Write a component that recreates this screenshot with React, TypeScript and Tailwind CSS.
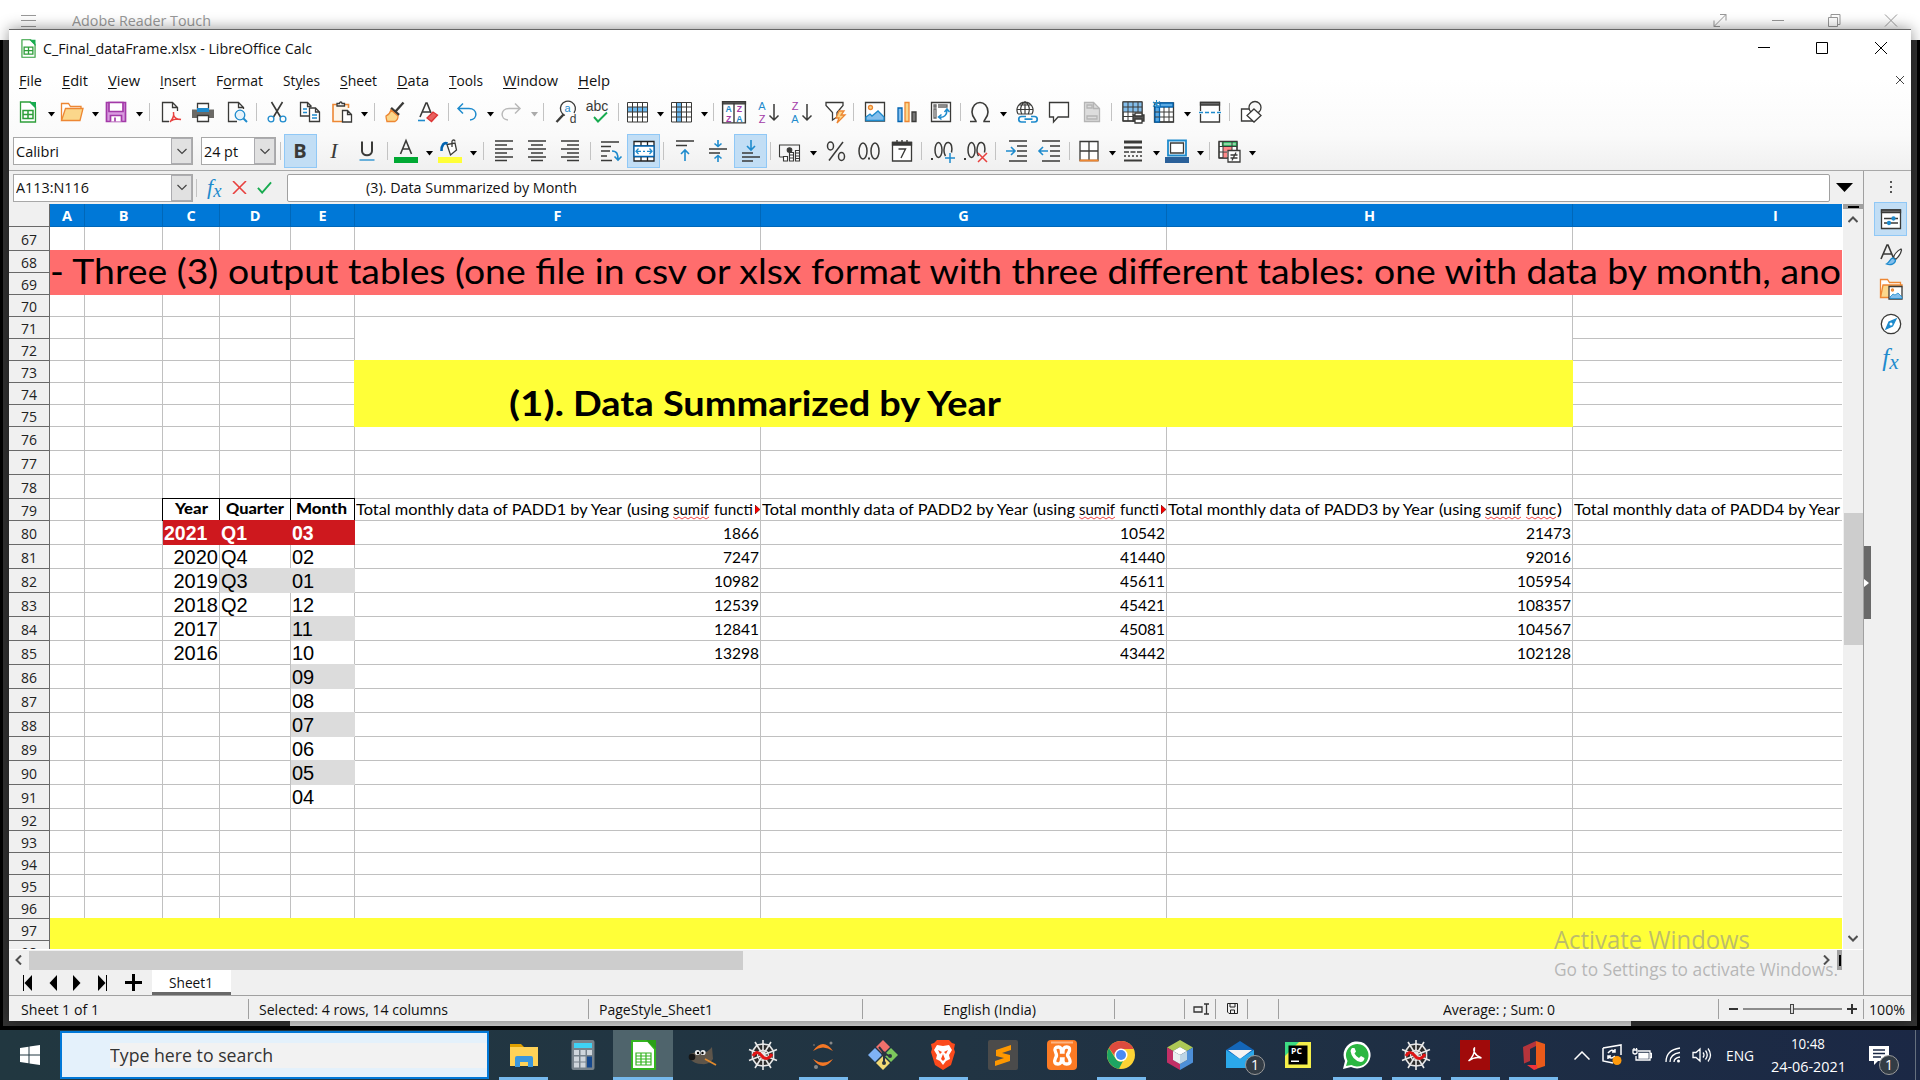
import React, { useLayoutEffect, useRef } from "react";

const K = "#3a3a38";
const B = "#1e8bcd";
const O = "#ed8733";
const P = "#a33aa8";
const G = "#18ab50";

type Kids = { children?: React.ReactNode };

/* Single-line label squeezed or stretched to an exact width. */
function Fit({ w, className = "", children }: Kids & { w: number; className?: string }) {
  const ref = useRef<HTMLSpanElement>(null);
  useLayoutEffect(() => {
    const el = ref.current;
    if (!el) return;
    el.style.transform = "none";
    const n = el.getBoundingClientRect().width;
    if (n > 0) el.style.transform = `scaleX(${w / n})`;
  }, [w]);
  return (
    <span className={`inline-block shrink-0 text-left whitespace-nowrap ${className}`} style={{ width: w }}>
      <span ref={ref} className="inline-block origin-left">{children}</span>
    </span>
  );
}

/* Flow row whose items are centred on the given horizontal stops. */
function Strip({ start, items, className = "" }: { start: number; items: [number, React.ReactNode][]; className?: string }) {
  return (
    <div className={`flex items-center ${className}`}>
      {items.map(([x, node], i) => (
        <div key={i} className="flex w-0 shrink-0 items-center justify-center" style={{ marginLeft: x - (i ? items[i - 1][0] : start) }}>
          <div className="shrink-0">{node}</div>
        </div>
      ))}
    </div>
  );
}

function S({ children, s = 24, c = K, sw = 1.3 }: Kids & { s?: number; c?: string; sw?: number }) {
  return (
    <svg width={s} height={s} viewBox="0 0 24 24" fill="none" stroke={c} strokeWidth={sw} className="block overflow-visible">
      {children}
    </svg>
  );
}

const Dn = ({ c = "#000" }: { c?: string }) => (
  <svg width="7" height="5" viewBox="0 0 7 5" className="mt-1 block"><path d="M0 0h7L3.500 4.500z" fill={c} /></svg>
);
const Sep = () => <div className="h-[18px] w-px bg-[#c3c3c3]" />;
const T = ({ x, y, s, f = K, b = "400", children }: Kids & { x: number; y: number; s: number; f?: string; b?: string }) => (
  <text x={x} y={y} fontSize={s} fill={f} stroke="none" fontWeight={b} fontFamily="Liberation Sans, sans-serif" textAnchor="middle">{children}</text>
);

const CalcDoc = ({ s = 24 }: { s?: number }) => (
  <S s={s} c="#2e9e3a"><path d="M4.500 2h10l5 5v15h-15z" fill="#fff" /><path d="M13 2h7v7z" fill={G} stroke="none" /><path d="M7 10.500h10v8H7zM7 14.500h10M12 10.500v8" strokeWidth="1.500" /></S>
);
const Folder = () => <S c={O}><path d="M1.500 20V3.500h7l2 3h10.500v2" fill="#fff" /><path d="M1.500 20.500 5.500 8.500h17.500l-3 12z" fill="#fbd78b" /></S>;
const Save = () => <S c={P} sw={1.700}><path d="M2.500 2.500h19v19h-19z" fill="#d99be0" /><path d="M5 2.500h14v9H5z" fill="#fff" /><path d="M6.500 21.500v-6h11v6" fill="#fff" /><path d="M11 17.500v4" /></S>;
const Pdf = () => <S><path d="M10 21.500H3.500v-19h10l5 5V11M13.500 2.500v5h5" /><path d="M11 22c3-3 4-7 3.500-10M14.500 15c1 3 4 4.500 7.500 4.500M11 21.500c3-2 7-3 11-2" stroke="#e8403e" strokeWidth="1.500" /></S>;
const Print = () => <S><path d="M6.500 9V3.500h11V9" fill="#fff" /><path d="M1 9.500h22v8.500H1z" fill="#6b6a66" stroke="none" /><path d="M6 8h12v4H6z" fill={B} stroke="none" /><path d="M6.500 15.500h11v6h-11z" fill="#fff" /></S>;
const Preview = () => <S><path d="M12 21.500H3.500v-19h10l5 5V9M13.500 2.500v5h5" /><circle cx="15" cy="15" r="4.800" stroke={B} fill="#e6f3fb" /><path d="m18.500 18.500 3.500 3.500" stroke={B} strokeWidth="2" /></S>;
const Cut = () => <S><path d="M6.500 2l9 15M17.500 2l-9 15" strokeWidth="1.600" /><circle cx="6" cy="19" r="2.900" stroke={B} /><circle cx="18" cy="19" r="2.900" stroke={B} /></S>;
const Copy = () => <S><path d="M11 16H2.500V2.500h7l4 4M9.500 2.500v4h4" /><path d="M11.500 8h6l4 4v9.500h-10zM17.500 8v4h4" fill="#fff" /><path d="M5 9h4M5 12.500h4M14 15h5M14 18h5" stroke={B} /></S>;
const Paste = () => <S><path d="M12 21.500H3v-17h15.500V8" stroke={O} strokeWidth="1.600" fill="#fdf6ea" /><path d="M7 6V3.500h2.500c0-2 2.500-2 2.500 0h2.500V6z" fill="#fff" /><path d="M12.500 10.500h5l4 4v7.500h-9zM17.500 10.500v4h4" fill="#fff" /></S>;
const Brush = () => <S><path d="m20.500 2.500-8 9" strokeWidth="2.400" /><path d="m8 8 8 7" strokeWidth="2.400" /><path d="M8 10c-1 4-3 5-5 6 0 3 1 5 1 5.500h8c2-1 3-4 3-5.500z" fill="#fbd78b" stroke={O} /></S>;
const Clear = () => <S><path d="m5 17 6-14h1l4 10M7 12h8" strokeWidth="1.600" /><path d="M3 20.500h7" stroke={B} strokeWidth="1.600" /><path d="m12 18 6-6 4.500 3-6 6.500z" fill="#e8605e" stroke="#d33" /></S>;
const Undo = () => <S c={B} sw={1.500}><path d="m8 3.500-5 5 5 5M3.500 8.500H14c9 0 9 11 1 11.500" /></S>;
const Redo = () => <S c="#b9b9b9" sw={1.500}><path d="m16 3.500 5 5-5 5M20.500 8.500H10c-9 0-9 11-1 11.500" /></S>;
const Find = () => <S><path d="M20 13a7.500 7.500 0 1 0-9 2.500" /><path d="m9.500 14.500-7 7.500" strokeWidth="2.400" /><T x={13.500} y={12} s={11} f={B}>a</T><T x={19} y={22.500} s={12}>d</T></S>;
const Spell = () => <S><T x={12} y={10.500} s={14}>abc</T><path d="m9 17 4 4.500 9-9" stroke={G} strokeWidth="1.900" /></S>;
const Table = ({ mode }: { mode: "row" | "col" }) => (
  <S><path d="M1.500 2.500h20v19.500h-20z" fill="#fff" stroke="none" />{mode === "row" ? <path d="M1.500 7h20v5h-20z" fill="#6db8ee" stroke="none" /> : <path d="M6.500 2.500h5V22h-5z" fill="#6db8ee" stroke="none" />}
    <path d="M1.500 2.500h20v19.500h-20zM1.500 7h20M1.500 12h20M1.500 17h20M6.500 2.500V22M11.500 2.500V22M16.500 2.500V22" strokeWidth="1" /></S>
);
const Sort = () => <S s={26}><path d="M1.500 2.500h21V22h-21z" fill="#fff" /><path d="M1.500 2.500h21v2h-21z" fill="#666" /><path d="M12 4v18" /><T x={7} y={12.300} s={8} f={B} b="700">A</T><T x={17} y={12.300} s={8} f={P} b="700">Z</T><T x={7} y={21} s={8} f={P} b="700">Z</T><T x={17} y={21} s={8} f={B} b="700">A</T></S>;
const Az = ({ up }: { up?: boolean }) => <S><T x={6} y={10} s={11} f={up ? P : B}>{up ? "Z" : "A"}</T><T x={6} y={22.500} s={11} f={up ? B : P}>{up ? "A" : "Z"}</T><path d="M18 4v16m-4.500-4.500L18 20l4.500-4.500" strokeWidth="1.500" /></S>;
const Filter = () => <S><path d="M3 2.500h17v3l-6 7V17l-4.500 3v-7.500L3 5.500z" fill="#fff" /><path d="m16 11-3 7h3l-2 5 8-8h-4l3-4z" fill="#fbd78b" stroke={O} /></S>;
const Img = () => <S><path d="M2.500 2.500h19V21h-19z" fill="#fff" /><circle cx="7.500" cy="7.500" r="2" fill="#fbd78b" stroke={O} /><path d="m3 17 4-3 2 2 6-5 6 6v3.500H3z" fill="#83beec" stroke={B} /></S>;
const Chart = () => <S><path d="M3 8h4v13.500H3z" fill="#83beec" stroke="#0063b1" /><path d="M10 2.500h4v19h-4z" fill="#fbd78b" stroke={O} /><path d="M17 12h4v9.500h-4z" fill="#777" /></S>;
const Pivot = () => <S><path d="M2.500 2.500h19v19h-19z" fill="#fff" /><path d="M5 5h2v2H5zM9 5h9v2H9M5 9v9h2V9z" stroke="#666" /><path d="M10 17c5 1 8-2 8-7m-2.500 2L18 9l2.500 3M12.500 14.500 9.500 17l3 2.500" stroke={B} strokeWidth="1.500" /></S>;
const Omega = () => <S><path d="M2 21.500h6c0-2-4-4-4-9.500C4 6 8 2.500 12 2.500S20 6 20 12c0 5.500-4 7.500-4 9.500h6" strokeWidth="1.600" /></S>;
const Globe = () => <S><path d="M4 14a8 8 0 1 1 14 0M3 9.500h16M11 1.500v13M4.500 5h13M11 1.500c-5 4-5 9 -3 13M11 1.500c5 4 5 9 3 13M4 14h14" strokeWidth="1.200" /><path d="M12 16.500H7.500a2.700 2.700 0 0 0 0 5.500H12M17 16.500h3.500a2.700 2.700 0 0 1 0 5.500H17M10.500 19.200h8" stroke={B} strokeWidth="1.700" /></S>;
const Comment = () => <S><path d="M2.500 2.500h19V17H11l-4.500 5v-5h-4z" fill="#fff" /></S>;
const HeadFoot = () => <S c="#b5b5b5"><path d="M4.500 2.500h9l6 6v13h-15z" fill="#ddd" /><path d="M13.500 2.500v6h6M7 5h5v3H7zM7 16h10v3H7z" /></S>;
const PrintArea = () => <S><path d="M2 2h19v19H2z" fill="#fff" /><path d="M2 2h19v10H2z" fill="#83beec" stroke="none" /><path d="M2 2h19M2 7h19M2 12h19M2 16.500h10M2 2v19M7 2v19M12 2v13M17 2v10M21 2v10M2 21h10" strokeWidth="1" /><path d="M12 15h11v6H12z" fill="#555" /><path d="M14 13h7v3h-7zM14 19h7v4h-7z" fill="#fff" /></S>;
const Freeze = () => <S><path d="M2.500 3h19v19h-19z" fill="#fff" /><path d="M3 7v15h4.500V7zM8 3h13v4H8z" fill="#5aa9e2" stroke="#0063b1" /><path d="M7.500 12h14M7.500 17h14M12 7v15M17 7v15M21.500 7v15h-14M3 12h4M3 17h4" strokeWidth="1" /><path d="M4.500 0v8M1 2l7 5M8 1.500l-7 5" stroke={B} strokeWidth="1.100" /></S>;
const Split = () => <S><path d="M2.500 11V2.500h19V11M2.500 14v8h19v-8" fill="#fff" /><path d="M2.500 2.500h19V5h-19z" fill="#777" /><path d="M1 12.500h22" stroke={B} strokeDasharray="4 2" strokeWidth="1.500" /></S>;
const Shapes = () => <S><path d="M2.500 9h11v12h-11z" fill="#fff" /><circle cx="16" cy="7.500" r="6" fill="#f8f8f8" /><path d="m15 9 7 6.500-7 6.500-7-6.500z" fill="#fff" /></S>;

const Lines = ({ d, children }: Kids & { d: string }) => <S sw={1.600}><path d={d} />{children}</S>;
const AL = "M3 2h18M3 6h12M3 10h18M3 14h12M3 18h18M3 21.500h12";
const AC = "M3 2h18M6 6h12M3 10h18M6 14h12M3 18h18M6 21.500h12";
const AR = "M3 2h18M9 6h12M3 10h18M9 14h12M3 18h18M9 21.500h12";
const FontColor = () => <S><path d="m6.500 15 5.500-13.500L17.500 15M8.500 10h7" strokeWidth="1.600" /><path d="M0 18h24v6H0z" fill="#00a933" stroke="none" /></S>;
const Fill = () => <S><path d="M9 5.500 12.500 16l6-5L17 4z" fill="#fff" /><path d="M14 8V2.500c0-2 3-2 3 0" /><path d="M9.500 4.500C6 3 3.500 6 3.500 12" stroke="#0063b1" strokeWidth="2.600" /><path d="M0 18h24v6H0z" fill="#ffff38" stroke="none" /></S>;
const Wrap = () => <Lines d="M2 3h18M2 7.500h10M2 12h9M2 17h6M2 21.500h11"><path d="M13 12c5 0 6 3 6 9m-3.500-3.500L19 21l3.500-3.500" stroke={B} /></Lines>;
const Merge = () => <S><path d="M2 2.500h20V22H2z" fill="#fff" stroke="#222" /><path d="M2 7h20M2 17.500h20M9 2.500V7M15.500 2.500V7M9 17.500V22M15.500 17.500V22" stroke="#222" /><path d="M2 7h20v10.500H2z" fill="#fff" stroke="#0063b1" /><path d="M4 12.300h5M15 12.300h5M6.500 9.500 4 12.300l2.500 2.700M17.500 9.500l2.500 2.800-2.500 2.700M11 12.300h2" stroke={B} /></S>;
const VTop = () => <Lines d="M3 2h18M3 6.500h11"><path d="M12 22V11m-4 4 4-4 4 4" stroke={B} /></Lines>;
const VMid = () => <Lines d="M3 10h18M3 14h11"><path d="M12 1v6.500M8.500 4.500 12 7.500l3.500-3M12 23v-6.500M8.500 19.500l3.500-3 3.500 3" stroke={B} /></Lines>;
const VBot = () => <Lines d="M3 14h11M3 18h18M3 22h11"><path d="M12 1v10M8 7l4 4 4-4" stroke={B} /></Lines>;
const Money = () => <S sw={1.100}><path d="M1.500 18V6h20v5M1.500 18H5" /><circle cx="11.500" cy="11" r="2.300" fill={K} /><path d="M5.500 17.500H9.500v4.500h-4zM11.500 13.500h4v8.500h-4zM17.500 11.500h4v10.500h-4z" fill="#fff" /><path d="M11.500 16h4M11.500 19h4M17.500 14h4M17.500 17h4M17.500 19.500h4" /></S>;
const Pct = () => <S sw={1.500}><path d="M19 3 5 21.500" /><ellipse cx="6.500" cy="7" rx="3" ry="4" /><ellipse cx="17.500" cy="17.500" rx="3" ry="4" /></S>;
const Num = () => <S sw={1.500}><ellipse cx="6" cy="12" rx="4" ry="8" /><ellipse cx="18" cy="12" rx="4" ry="8" /><path d="M11 19.500h2" strokeWidth="2" /></S>;
const Cal = () => <S><path d="M2.500 3.500h19V22h-19z" fill="#fff" /><path d="M2.500 3.500h19V6h-19z" fill={K} /><path d="M7 1v3M12 1v3M17 1v3M8.500 10h7l-4.500 9" strokeWidth="1.400" /></S>;
const Dec = ({ add }: { add?: boolean }) => <S sw={1.500}><path d="M0 20h2" strokeWidth="2.200" /><ellipse cx="7.500" cy="11" rx="3.500" ry="7.500" /><path d="M14.500 17c-3-5-1-14 3-13.500 3 .5 4 5 3 10" />{add ? <path d="M14 19h10M19 14v10" stroke={B} /> : <path d="m14 14 9 9M23 14l-9 9" stroke="#e8403e" />}</S>;
const Indent = ({ out }: { out?: boolean }) => <Lines d="M4 2h18M12 7h10M12 12h10M12 17h10M4 22h18"><path d={out ? "M10 12H1m4-4-4 4 4 4" : "M1 12h9M6 8l4 4-4 4"} stroke={B} /></Lines>;
const Borders = () => <S><path d="M3 2.500h18V21.500H3zM12 2.500v19M3 12h18" fill="#fff" /><path d="M2.500 21.500h19" stroke={O} strokeWidth="2" /></S>;
const LineStyle = () => <S><path d="M3 3h18" strokeWidth="3" /><path d="M3 8.500h18" strokeWidth="2.400" /><path d="M3 13h18" strokeDasharray="5 1.500" /><path d="M3 17h18" strokeDasharray="2 2" /><path d="M3 21.500h18" strokeWidth="2" /></S>;
const BorderColor = () => <S><path d="M3 1.500h18v15H3z" stroke={B} strokeWidth="1.800" fill="#fff" /><path d="M5.500 4h13v10h-13z" /><path d="M0 18h24v6H0z" fill="#2a6099" stroke="none" /></S>;
const Cond = () => <S><path d="M2 2.500h18V19H2z" fill="#fff" /><path d="M5.500 3h14v4h-14z" fill="#8fd6a5" stroke={G} /><path d="M6 8h9v4.500H6zM6 13h4v6H6z" fill="#f88" stroke="none" /><path d="M2 2.500h18V11M2 2.500V19h8M2 7.500h18M2 13h8M6 2.500V19M15 2.500V11" strokeWidth="1" /><path d="M11 11.500h12V23H11z" fill="#fff" /><path d="M13.500 16h7M13.500 19h7M19 13.500l-4 8" /></S>;

const Tog = ({ children }: Kids) => <div className="flex h-[34px] w-[33px] items-center justify-center border border-[#90c8f6] bg-[#c2def5]">{children}</div>;
const Fx = ({ size = "text-[24px]" }: { size?: string }) => (
  <span className={`block font-["Liberation_Serif",serif] leading-6 text-[#1e8bcd] italic ${size}`}>f<span className="relative top-[3px] text-[0.85em]">x</span></span>
);

const d = <Dn />;
const s = <Sep />;
const tools1: [number, React.ReactNode][] = [
  [28, <CalcDoc />], [51, d], [72, <Folder />], [95, d], [116, <Save />], [139, d], [149, s],
  [171, <Pdf />], [203, <Print />], [237, <Preview />], [256, s], [277, <Cut />], [310, <Copy />], [342, <Paste />], [364, d], [374, s],
  [395, <Brush />], [427, <Clear />], [448, s], [467, <Undo />], [490, d], [511, <Redo />], [534, <Dn c="#aaa" />], [543, s],
  [566, <Find />], [597, <Spell />], [618, s], [638, <Table mode="row" />], [660, d], [682, <Table mode="col" />], [704, d], [713, s],
  [734, <Sort />], [768, <Az />], [801, <Az up />], [835, <Filter />], [853, s], [875, <Img />], [907, <Chart />], [941, <Pivot />], [960, s],
  [980, <Omega />], [1003, d], [1026, <Globe />], [1059, <Comment />], [1092, <HeadFoot />], [1111, s],
  [1133, <PrintArea />], [1164, <Freeze />], [1187, d], [1210, <Split />], [1229, s], [1251, <Shapes />],
];

const Chevron = () => <svg width="10" height="7" viewBox="0 0 10 7" fill="none" stroke="#444" strokeWidth="1.200"><path d="m.5 1 4.500 4.500L9.500 1" /></svg>;
function Combo({ w, tw, text }: { w: number; tw: number; text: string }) {
  return (
    <div className="flex h-7 border border-[#a8a8a8] bg-white" style={{ width: w }}>
      <div className="flex flex-1 items-center pb-px pl-0.5"><Fit w={tw}>{text}</Fit></div>
      <div className="flex w-[21px] items-center justify-center border border-[#acacb0] bg-[#e1e1e1]"><Chevron /></div>
    </div>
  );
}

const tools2: [number, React.ReactNode][] = [
  [103, <Combo w={180} tw={43} text="Calibri" />], [238.500, <Combo w={75} tw={34} text="24 pt" />], [280, s],
  [300, <Tog><span className="text-[20px] font-bold text-[#3a3a38]">B</span></Tog>],
  [334, <span className='block font-["Liberation_Serif",serif] text-[22px] text-[#3a3a38] italic'>I</span>],
  [367, <S><path d="M7 2.500V12c0 5.500 10 5.500 10 0V2.500" strokeWidth="2" /><path d="M4.500 21h15" stroke={B} /></S>],
  [387, s], [406, <FontColor />], [429, d], [450, <Fill />], [473, d], [483, s],
  [504, <Lines d={AL} />], [537, <Lines d={AC} />], [570, <Lines d={AR} />], [590, s], [611, <Wrap />], [643.500, <Tog><Merge /></Tog>], [663, s],
  [685, <VTop />], [718, <VMid />], [750.500, <Tog><VBot /></Tog>], [770, s],
  [790, <Money />], [813, d], [836, <Pct />], [869, <Num />], [902, <Cal />], [921, s], [942.500, <Dec add />], [976, <Dec />], [995, s],
  [1017, <Indent />], [1050, <Indent out />], [1069, s], [1088.500, <Borders />], [1112, d], [1133, <LineStyle />], [1156, d], [1177, <BorderColor />], [1200, d], [1209, s],
  [1229, <Cond />], [1252, d],
];

const menus: [string, number][] = [["File", 23], ["Edit", 26], ["View", 32], ["Insert", 36], ["Format", 47], ["Styles", 37], ["Sheet", 37], ["Data", 32], ["Tools", 34], ["Window", 55], ["Help", 32]];
const underlineAt: Record<string, number> = { Format: 1, Styles: 2 };

const ROWS = Array.from({ length: 32 }, (_, i) => 67 + i);
const rowH = (r: number) => (r === 67 || (r >= 76 && r <= 78) || (r >= 80 && r <= 91) ? 24 : 22);
const YEARS = ["2020", "2019", "2018", "2017", "2016"];
const QUARTERS = ["Q4", "Q3", "Q2"];
const MONTHS = ["02", "01", "12", "11", "10", "09", "08", "07", "06", "05", "04"];
const SUMS = [
  ["1866", "7247", "10982", "12539", "12841", "13298"],
  ["10542", "41440", "45611", "45421", "45081", "43442"],
  ["21473", "92016", "105954", "108357", "104567", "102128"],
];

/* Cell or merged range placed on the sheet grid; columns count from 1 (A). */
function Cell({ r, c, rs = 1, cs = 1, className = "", children }: Kids & { r: number; c: number; rs?: number; cs?: number; className?: string }) {
  return <div className={`flex min-w-0 items-center overflow-hidden whitespace-nowrap ${className}`} style={{ gridRow: `${r - 66} / span ${rs}`, gridColumn: `${c} / span ${cs}` }}>{children}</div>;
}

/* Word flagged by the spell checker. */
const Wavy = ({ w, children }: Kids & { w: number }) => (
  <span className="relative flex">
    <Fit w={w}>{children}</Fit>
    <svg width={w} height="4" className="absolute top-[17px] left-0"><path d={`M0 1${"l3 2l3 -2".repeat(Math.ceil(w / 6))}`} fill="none" stroke="#f04848" /></svg>
  </span>
);

function Sheet() {
  return (
    <div className="flex h-[745px] shrink-0 overflow-hidden bg-white">
      <div className="w-[41px] shrink-0 border-r border-[#696969] bg-[#f0f0f0] text-[14.500px] text-[#222]">
        <div className="h-[23px] border-b border-[#696969]" />
        {ROWS.map((r) => (
          <div key={r} className="flex items-center justify-center border-b border-[#696969] pt-[2.500px] leading-none" style={{ height: rowH(r) }}><Fit w={16}>{r}</Fit></div>
        ))}
      </div>
      <div className="w-[1792px] shrink-0 overflow-hidden">
        <div className="grid h-[23px] w-[1929px] grid-cols-[35px_78px_57px_71px_64px_406px_406px_406px_406px] bg-[#0078d7] text-[14.500px] leading-[23px] font-bold text-white">
          {"ABCDEFGHI".split("").map((l) => <div key={l} className="h-[23px] border-r border-b border-[#0067b8] text-center">{l}</div>)}
        </div>
        <div className="grid w-[1929px] grid-cols-[35px_78px_57px_71px_64px_406px_406px_406px_406px]" style={{ gridTemplateRows: ROWS.map((r) => `${rowH(r)}px`).join(" ") }}>
          {ROWS.map((r) => [1, 2, 3, 4, 5, 6, 7, 8, 9].map((c) => <Cell key={`${r}-${c}`} r={r} c={c} className="border-r border-b border-[#c0c0c0]" />))}

          <Cell r={68} c={1} rs={2} cs={9} className='-mt-px bg-[#ff6d6d] font-["Lato",sans-serif] text-[35px] leading-none text-black'>
            <Fit w={1791} className="-mt-1">- Three (3) output tables (one file in csv or xlsx format with three different tables: one with data by month, ano</Fit>
          </Cell>
          <Cell r={70} c={6} cs={3} className="border-r border-b border-[#c0c0c0] bg-white" />
          <Cell r={71} c={6} rs={2} cs={3} className="border-r border-[#c0c0c0] bg-white" />
          <Cell r={73} c={6} rs={3} cs={3} className='-mt-px -ml-px gap-[9px] bg-[#ffff38] pl-[155px] font-["Lato",sans-serif] text-[35px] leading-none font-bold text-black'>
            <Fit w={55} className="mt-[18px]">(1).</Fit><Fit w={428} className="mt-[18px]">Data Summarized by Year</Fit>
          </Cell>
          <Cell r={97} c={1} rs={2} cs={9} className="-mt-px bg-[#ffff38]" />

          {([["Year", 33], ["Quarter", 58], ["Month", 51]] as [string, number][]).map(([t, w], i) => (
            <Cell key={t} r={79} c={3 + i} className={`-mt-px -ml-px justify-center border-t border-l border-black bg-white pb-0.5 font-["Lato",sans-serif] text-[15.500px] leading-none font-black text-black ${i === 2 ? "border-r pr-0.5" : "pr-px"}`}><Fit w={w}>{t}</Fit></Cell>
          ))}
          {["2021", "Q1", "03"].map((t, i) => (
            <Cell key={t} r={80} c={3 + i} className='-mt-px bg-[#ce181e] pt-0.5 pl-px font-["Liberation_Sans",sans-serif] text-[19.500px] leading-none font-bold text-white'>{t}</Cell>
          ))}
          {YEARS.map((t, i) => <Cell key={t} r={81 + i} c={3} className='justify-end pr-0.5 pb-px font-["Liberation_Sans",sans-serif] text-[20px] leading-none text-black'>{t}</Cell>)}
          {QUARTERS.map((t, i) => <Cell key={t} r={81 + i} c={4} className={`pl-px font-["Liberation_Sans",sans-serif] text-[20px] leading-none text-black ${t === "Q3" ? "-mt-px bg-[#dcdcdc]" : "pb-px"}`}>{t}</Cell>)}
          {MONTHS.map((t, i) => <Cell key={t} r={81 + i} c={5} className={`pl-px font-["Liberation_Sans",sans-serif] text-[20px] leading-none text-black ${i % 2 === 1 ? "-mt-px bg-[#dcdcdc]" : "pb-px"}`}>{t}</Cell>)}

          {[1, 2, 3, 4].map((n) => (
            <Cell key={n} r={79} c={5 + n} className='pb-[3px] pl-px font-["Lato",sans-serif] text-[15.500px] leading-5 text-black'>
              <Fit w={266}>Total monthly data of PADD{n} by Year</Fit>
              {n < 4 && <Fit w={42} className="ml-[5px]">(using</Fit>}
              {n < 4 && <div className="ml-[4px]"><Wavy w={36}>sumif</Wavy></div>}
              {n < 3 && <Fit w={39} className="ml-[5px]">functi</Fit>}
              {n < 3 && <svg width="5" height="9" viewBox="0 0 5 9" className="mt-px ml-0.5 shrink-0"><path d="M0 0l5 4.500L0 9z" fill="#f00" stroke="#300" strokeWidth=".5" /></svg>}
              {n === 3 && <div className="ml-[5px]"><Wavy w={30}>func</Wavy></div>}
              {n === 3 && <Fit w={5} className="ml-px">)</Fit>}
            </Cell>
          ))}
          {SUMS.map((col, ci) => col.map((t, i) => (
            <Cell key={`${ci}${t}`} r={80 + i} c={6 + ci} className='justify-end pt-0.5 pr-0.5 font-["Lato",sans-serif] text-[15.500px] leading-none text-black'><Fit w={t.length * 9}>{t}</Fit></Cell>
          )))}
        </div>
      </div>
      <div className="ml-px flex w-5 flex-col items-center bg-[#f0f0f0]">
        <div className="flex h-[5px] w-full items-center justify-center bg-[#a0a0a0]"><div className="h-0.5 w-[11px] bg-black" /></div>
        <svg width="10" height="7" viewBox="0 0 10 7" fill="none" stroke="#505050" strokeWidth="2" className="mt-[7px]"><path d="m.5 6L5 1.500 9.500 6" /></svg>
        <div className="mt-[290px] h-[132px] w-[19px] bg-[#cdcdcd]" />
        <svg width="10" height="7" viewBox="0 0 10 7" fill="none" stroke="#505050" strokeWidth="2" className="mt-[290px]"><path d="m.5 1L5 5.500 9.500 1" /></svg>
      </div>
    </div>
  );
}

const Tri = ({ dir, bar }: { dir: "l" | "r"; bar?: boolean }) => (
  <svg width="12" height="16" viewBox="0 0 12 16" className={dir === "r" ? "block -scale-x-100" : "block"}><path d="M10 0v16L2.500 8z" />{bar && <path d="M1 0h1v16H1z" />}</svg>
);

const Vs = () => <div className="h-5 w-px bg-[#a0a0a0]" />;
const status: [number, React.ReactNode][] = [
  [60, <Fit w={78}>Sheet 1 of 1</Fit>], [248, <Vs />], [353.500, <Fit w={189}>Selected: 4 rows, 14 columns</Fit>], [588, <Vs />],
  [656, <Fit w={114}>PageStyle_Sheet1</Fit>], [862, <Vs />], [989.500, <Fit w={93}>English (India)</Fit>], [1114, <Vs />], [1184, <Vs />],
  [1201, <svg width="17" height="12" viewBox="0 0 17 12" fill="none" stroke="#333" strokeWidth="1.300"><path d="M1 4h8v5H1zM11 1h5M11 11h5M13.500 1v10" /></svg>], [1215, <Vs />],
  [1232, <svg width="11" height="11" viewBox="0 0 11 11" fill="none" stroke="#222" strokeWidth="1"><path d="M.5.5h10v10h-8.500L.5 9zM3 .5v3.500h5V.5M3.500 10.500V7h4v3.500" /></svg>], [1247, <Vs />], [1278, <Vs />],
  [1499, <Fit w={112}>Average: ; Sum: 0</Fit>], [1718, <Vs />],
  [1733, <div className="h-0.5 w-[9px] bg-[#333]" />],
  [1792, <div className="flex w-[99px] items-center justify-center"><div className="h-0.5 flex-1 bg-[#8c8c8c]" /><div className="h-[10px] w-[4px] border border-[#444] bg-[#ddd]" /><div className="h-0.5 flex-1 bg-[#8c8c8c]" /></div>],
  [1852, <svg width="10" height="10" viewBox="0 0 10 10"><path d="M4 0h2v4h4v2H6v4H4V6H0V4h4z" fill="#333" /></svg>], [1863, <Vs />],
  [1886.500, <Fit w={36}>100%</Fit>],
];

function CalcWindow() {
  return (
    <div className='absolute top-[29px] left-[9px] flex h-[992px] w-[1902px] flex-col border-t border-[#666] bg-[#f0f0f0] font-["Open_Sans",sans-serif] text-[15px] leading-5 text-[#111] shadow-[0_0_14px_rgba(0,0,0,0.45)]'>
      <div className="h-[140px] shrink-0 bg-linear-to-b from-white from-35% via-[#fafafa] via-75% to-[#f0f0f0]">
        <div className="flex h-9 items-center pl-[9px]">
          <CalcDoc s={21} />
          <Fit w={269} className="ml-1">C_Final_dataFrame.xlsx - LibreOffice Calc</Fit>
          <svg width="132" height="14" viewBox="0 0 132 14" fill="none" stroke="#000" className="mt-[-1px] mr-[23px] ml-auto"><path d="M2 6.500h12M60.500 1.500h11v11h-11zM119 1l12 12M131 1l-12 12" /></svg>
        </div>
        <div className="flex h-[30px] items-center gap-5 pb-0.5 pl-2.5">
          {menus.map(([m, w]) => {
            const u = underlineAt[m] ?? 0;
            return <Fit key={m} w={w}>{m.slice(0, u)}<span className="underline underline-offset-2">{m[u]}</span>{m.slice(u + 1)}</Fit>;
          })}
          <svg width="8" height="8" viewBox="0 0 8 8" stroke="#444" className="mr-[7px] ml-auto"><path d="m0 0 8 8M8 0 0 8" /></svg>
        </div>
        <Strip start={9} items={tools1} className="h-8" />
        <Strip start={9} items={tools2} className="h-[42px] pt-1" />
      </div>
      <div className="flex h-[825px] shrink-0 border-t border-[#a8a8a8]">
        <div className="w-[1854px] shrink-0">
          <div className="flex h-[33px] items-center pl-1">
            <Combo w={180} tw={73} text="A113:N116" />
            <div className="ml-[3px] h-[18px] w-px bg-[#c3c3c3]" />
            <div className="ml-[10px] w-[18px]"><Fx size="text-[22px]" /></div>
            <svg width="15" height="13" viewBox="0 0 16 14" stroke="#e8403e" strokeWidth="1.700" className="ml-[7px]"><path d="m1 0 14 14M15 0 1 14" /></svg>
            <svg width="15" height="13" viewBox="0 0 16 13" fill="none" stroke={G} strokeWidth="2" className="ml-[10px]"><path d="m1 7 4.500 5L15 1" /></svg>
            <div className="ml-[15px] flex h-7 w-[1543px] items-center rounded-[2px] border border-[#a0a0a0] bg-white pb-px pl-[78px]"><Fit w={211}>(3). Data Summarized by Month</Fit></div>
            <svg width="17" height="9" viewBox="0 0 17 9" className="ml-1.5"><path d="M0 0h17L8.500 9z" /></svg>
          </div>
          <Sheet />
          <div className="h-px bg-white" />
          <div className="flex h-5 items-center">
            <svg width="7" height="10" viewBox="0 0 7 10" fill="none" stroke="#505050" strokeWidth="2" className="ml-1.5"><path d="M6 .5 1.500 5 6 9.500" /></svg>
            <div className="ml-[7px] h-[19px] w-[714px] bg-[#cdcdcd]" />
            <svg width="7" height="10" viewBox="0 0 7 10" fill="none" stroke="#505050" strokeWidth="2" className="ml-auto"><path d="M1 .5 5.500 5 1 9.500" /></svg>
            <div className="mr-[21px] ml-[7px] flex h-full w-[5px] items-center justify-center bg-[#a0a0a0]"><div className="h-[11px] w-0.5 bg-black" /></div>
          </div>
          <div className="flex h-[25px] items-center">
            <div className="ml-[13px] flex gap-[12.500px]"><Tri dir="l" bar /><Tri dir="l" /><Tri dir="r" /><Tri dir="r" bar /></div>
            <svg width="17" height="17" viewBox="0 0 17 17" className="ml-[17px]"><path d="M7 0h3v7h7v3h-7v7H7v-7H0V7h7z" /></svg>
            <div className="ml-[10px] flex h-full w-[79px] items-center justify-center border-b-[3px] border-[#696969] bg-white pt-0.5 pr-px"><Fit w={44}>Sheet1</Fit></div>
          </div>
        </div>
        <div className="h-full w-px bg-[#a0a0a0]" />
        <div className="relative flex flex-1 flex-col items-center pl-1.5">
          <div className="absolute top-[375px] left-0 flex h-[73px] w-[7px] items-center bg-[#696969]"><svg width="5" height="8" viewBox="0 0 5 8"><path d="M0 0l5 4-5 4z" fill="#fff" /></svg></div>
          <div className="mt-[10px] flex flex-col gap-[3px]"><i className="size-0.5 bg-[#555]" /><i className="size-0.5 bg-[#555]" /><i className="size-0.5 bg-[#555]" /></div>
          <div className="mt-[9px]"><Tog><S><path d="M2.500 3h19v18.500h-19z" fill="#fff" /><path d="M2.500 3h19v2.500h-19z" fill="#777" /><path d="M5 11.500h14M5 16h14" /><circle cx="14.500" cy="11.500" r="1.500" fill={B} stroke={B} /><circle cx="10" cy="16" r="1.500" fill={B} stroke={B} /></S></Tog></div>
          <div className="mt-[7px]"><S><path d="M2 16 8 2h1l5.500 13M4.500 11h8" strokeWidth="1.600" /><path d="M22 6c-4 2-7 6-7.500 8.500l2 2C19.500 14 22 10 22.500 7z" fill="#fff" /><path d="M14 15c-3 0-3 4-6.500 6 4 1.500 9 0 9-4z" fill="#83beec" stroke={B} /></S></div>
          <div className="mt-[10px]"><S><path d="M1.500 20V2.500h7l2 3h11V9" stroke={O} fill="#fff" /><path d="M1.500 20.500 4 8h19l-2 12.500z" fill="#fbd78b" stroke={O} /><path d="M10 9.500h13V22H10z" fill="#fff" /><circle cx="13.500" cy="13" r="1" stroke={O} /><path d="m11 20 3-3 2 1 3-2 4 4v1.500H11z" fill="#83beec" stroke={B} strokeWidth=".8" /></S></div>
          <div className="mt-[11px]"><S><circle cx="12" cy="12" r="9.700" fill="#fff" /><path d="M17 7 13.500 14 7 17l3-7z" fill={B} stroke={B} /><circle cx="12" cy="12" r="1.500" fill="#fff" stroke="none" /></S></div>
          <div className="mt-[10px]"><Fx size="text-[25px]" /></div>
        </div>
      </div>
      <div className="h-px shrink-0 bg-[#a0a0a0]" />
      <Strip start={9} items={status} className="h-[25px] shrink-0" />
    </div>
  );
}

const W = ({ children, size = 30 }: Kids & { size?: number }) => <svg width={size} height={size} viewBox="0 0 30 30" className="block">{children}</svg>;
const Spider = () => (
  <W>
    <circle cx="15" cy="15" r="11" fill="#2b2b2b" />
    <g fill="none" stroke="#e8e8e8"><path d="M15 0v30M1 9.500l28 11M29 9.500l-28 11M7 2l16 26M23 2 7 28" strokeWidth="1.600" /><path d="m15 4 6 1 4.500 6 0 8-4.500 6-6 1-6-1-4.500-6v-8L9 5z" strokeWidth="1.600" /><path d="m15 10 4 1.500 1.500 3.500-1.500 4-4 1.500-4-1.500L9.500 15l1.500-3.500z" strokeWidth="1.200" /></g>
    <path d="M5 16c3-5 6-4 9 0s7 3 10-2" fill="none" stroke="#e01515" strokeWidth="3" />
  </W>
);
const Badge = ({ children }: Kids) => <div className="flex size-[20px] items-center justify-center rounded-full border border-[#9a9a9a] bg-[#333c45] text-[14px] leading-none text-white">{children}</div>;

const taskIcons: { x: number; run?: boolean; icon: React.ReactNode }[] = [
  { x: 523.500, run: true, icon: <W><path d="M1 4h11l3 3v5H1z" fill="#e0a000" /><path d="M1 7h28v19H1z" fill="#ffd257" /><path d="M6 27V18q0-2 2-2h14q2 0 2 2v9h-5v-5h-8v5z" fill="#3b97dd" /></W> },
  { x: 582.500, icon: <W><rect x="3.500" width="23" height="30" rx="2" fill="#77838c" /><path d="M6 3h18v5H6z" fill="#3fd2f5" /><path d="M6 10h5v5H6zM12.500 10h5v5h-5zM19 10h5v5h-5zM6 16.500h5v5H6zM12.500 16.500h5v5h-5zM6 22.500h5v5H6zM12.500 22.500h5v5h-5z" fill="#cfd6dc" /><path d="M19 16.500h5v11h-5z" fill="#16498e" /></W> },
  { x: 643, icon: <W><path d="M4 1h16l7 8v20H4z" fill="#fff" stroke="#34b420" strokeWidth="2" /><path d="M18 0h10v9z" fill="#2aa018" /><path d="M8 13h15v12H8zM8 16h15M8 19h15M8 22h15M13 13v12M18 13v12" fill="none" stroke="#34b420" strokeWidth="1.200" /></W> },
  { x: 702.500, icon: <W><path d="M2 14q5-3 12 0 6-2 10-7l1 12q-4 6-11 5-8 0-12-5z" fill="#5e554a" /><circle cx="4" cy="17" r="3.300" fill="#161616" /><circle cx="9.500" cy="12.500" r="2.600" fill="#eee" /><circle cx="15" cy="12.500" r="2.600" fill="#eee" /><circle cx="10" cy="13" r="1.200" /><circle cx="14.500" cy="13" r="1.200" /><path d="m17 19 11 6" stroke="#e08a2e" strokeWidth="1.800" /></W> },
  { x: 763, icon: <Spider /> },
  { x: 823, run: true, icon: <W><path d="M5 11q10-14 20 0-10-7-20 0zM5 19q10 14 20 0-10 7-20 0z" fill="#f37726" /><circle cx="23" cy="3" r="1.500" fill="#888" /><circle cx="8" cy="27" r="2" fill="#888" /><circle cx="6" cy="5" r="1" fill="#666" /></W> },
  { x: 883, icon: <W><path d="m15 0 7 7-7 7-7-7z" fill="#f0706c" /><path d="m7 8 7 7-7 7-7-7z" fill="#7fb2f5" /><path d="m23 8 7 7-7 7-7-7z" fill="#7cc85c" /><path d="m15 16 7 7-7 7-7-7z" fill="#f2d874" /><path d="M11 7l5 6v10M16 13l5 3" fill="none" stroke="#2c3440" strokeWidth="2" /><circle cx="16" cy="14" r="2.500" fill="#2c3440" /><circle cx="16" cy="23" r="2" fill="#2c3440" /><circle cx="22" cy="16" r="2" fill="#2c3440" /></W> },
  { x: 943, run: true, icon: <W><path d="M9 0h12l3 3 3 1-1 5 1 3-4 13-8 5-8-5-4-13 1-3-1-5 3-1z" fill="#fb4a1c" /><path d="m9 5 6 1 6-1 3 5-3 5 1 4-4 2-3 4-3-4-4-2 1-4-3-5z" fill="#fff" /><path d="m10 10 4 2-2 2zM20 10l-4 2 2 2zM15 14l2 5-2 2-2-2z" fill="#fb4a1c" /></W> },
  { x: 1003, icon: <W><rect width="30" height="30" rx="2" fill="#4b4b4b" /><path d="m23 5-15 5v6l8 2-9 3v5l15-5v-6l-8-2 9-3z" fill="#ff9800" /></W> },
  { x: 1062, icon: <W><rect width="30" height="30" rx="4" fill="#fb7a24" /><path d="M4 1.500h22v2H4z" fill="#fdb583" /><path d="M8.500 12q-2-5 3-5 3 0 3 5h1.500q0-5 3.500-5 5 0 2 6-2 2 0 4 4 7-2 7-4 0-3.500-5h-1.500q0 5-3.500 5-5 0-2.500-6 2-2 0-6z" fill="none" stroke="#fff" strokeWidth="3.300" /></W> },
  { x: 1121, run: true, icon: <W><circle cx="15" cy="15" r="14" fill="#fdd335" /><path d="M2.900 8A14 14 0 0 1 27.600 9H15a6 6 0 0 0-5.500 8z" fill="#dd4b3e" /><path d="M2.900 8 9.500 18.500A6 6 0 0 0 17 21l-4 7.800A14 14 0 0 1 2.900 8z" fill="#1da462" /><circle cx="15" cy="15" r="6.500" fill="#fff" /><circle cx="15" cy="15" r="5" fill="#4a8af4" /></W> },
  { x: 1180, icon: <W><path d="m15 0 13 7.500-6 3.500-7-4-7 4-6-3.500z" fill="#adc855" /><path d="M2 7.500 8 11v9l7 4v6L2 22.500z" fill="#c32f66" /><path d="M28 7.500 22 11v9l-7 4v6l13-7.500z" fill="#4d8fd8" /><path d="m15 7 7 4-7 4-7-4z" fill="#fff" /><path d="m8 11 7 4v9l-7-4z" fill="#e8eef0" /><path d="m22 11-7 4v9l7-4z" fill="#bcd4e6" /></W> },
  { x: 1240, icon: <W><path d="M1 10 15 1l14 9v18H1z" fill="#1466b8" /><path d="M3 10h24l-12 9z" fill="#f3f3f3" /><path d="m1 10 14 9 14-9v18H1z" fill="#2ba8ea" /></W> },
  { x: 1298, icon: <W><path d="M2 2h26v26H2z" fill="#f5ef4a" /><path d="M2 2h14L2 16z" fill="#3ddc84" /><path d="M5.500 5.500h19v19h-19z" /><text x="13.500" y="14" fontSize="8.500" fontWeight="700" fill="#fff" textAnchor="middle" fontFamily="Open Sans, sans-serif">PC</text><path d="M8 20.500h8v1.500H8z" fill="#fff" /></W> },
  { x: 1357, run: true, icon: <W><path d="M1 29l2-8A13.500 13.500 0 1 1 9 27z" fill="#fff" /><path d="M4 26l1.500-5A11.300 11.300 0 1 1 9.500 25z" fill="#2bb741" /><path d="M10 8h2.500l1.500 3.500-1.500 2q1.500 3 4.500 4.500l2-2 3.500 2q-.5 4-4 4Q10 20 8.500 11 9 9 10 8z" fill="#fff" /></W> },
  { x: 1416, run: true, icon: <Spider /> },
  { x: 1475, run: true, icon: <W><path d="M0 0h30v30H0z" fill="#a00a0a" /><path d="M8.500 21c4-3 6.500-9 6-13-2 1 0 8 7 10-4-1-9 0-13 3z" fill="none" stroke="#fff" strokeWidth="1.400" /></W> },
  { x: 1534, run: true, icon: <W><path d="M4 7 17 1v5l-6 3v12l-6 2.500z" fill="#b5343b" /><path d="m17 1 9 3v22l-9 3z" fill="#ea5a1a" /><path d="M8 25h10v4l-3 1z" fill="#f0343a" /></W> },
];

function Taskbar() {
  return (
    <div className='absolute inset-x-0 bottom-0 flex h-[50px] bg-linear-to-r from-[#213740] via-[#213443] to-[#1b2845] font-["Open_Sans",sans-serif] text-white'>
      <div className="flex w-[60px] items-center justify-center"><svg width="20" height="20" viewBox="0 0 20 20" fill="#fff"><path d="M0 3l8.500-1.200v7.700H0zM9.500 1.600 20 0v9.500H9.500zM0 10.500h8.500v7.700L0 17zM9.500 10.500H20V20L9.500 18.400z" /></svg></div>
      <div className="mt-px flex h-[48px] w-[429px] items-center border-2 border-[#0078d7] bg-[#e4f1fb] pl-12 text-[18.500px] text-[#333]"><div className="flex h-[25px] w-full items-center bg-[#f2f2f2]"><Fit w={163}>Type here to search</Fit></div></div>
      <div className="ml-[5px] flex">
        {taskIcons.map(({ x, run, icon }, i) => {
          const left = i ? (taskIcons[i - 1].x + x) / 2 : 494;
          const right = i < taskIcons.length - 1 ? (taskIcons[i + 1].x + x) / 2 : 1563;
          return (
            <div key={x} className={`relative flex items-center justify-center ${i === 2 ? "border-b-[3px] border-[#76b9ed] bg-[#4f646c] pt-[3px]" : ""}`} style={{ width: right - left }}>
              {icon}
              {run && <div className="absolute bottom-0 h-[3px] w-[49px] bg-[#76b9ed]" />}
              {i === 12 && <div className="absolute top-[25px] left-[35px]"><Badge>1</Badge></div>}
            </div>
          );
        })}
      </div>
      <Strip start={1563} className="h-full text-[15px]" items={[
        [1581.500, <svg width="16" height="9" viewBox="0 0 16 9" fill="none" stroke="#fff" strokeWidth="1.500"><path d="m.5 8.500 7.500-7.500 7.500 7.500" /></svg>],
        [1612, <svg width="20" height="22" viewBox="0 0 20 22" fill="none" stroke="#fff" strokeWidth="1.500"><path d="M1 4l18-3v10M1 4v13l10 2M6 9q4-5 7-1M13 5v3h-3M13 12q-4 4-7 0M6 15v-3h3" /><circle cx="15" cy="16.500" r="4.500" fill="#ff9a0c" stroke="none" /></svg>],
        [1642, <svg width="20" height="14" viewBox="0 0 20 14" fill="none" stroke="#fff" strokeWidth="1.300"><path d="M6 3h12v9H4V8M18 5.500h1.500v4H18M1 2h4v3q-2 2-4 0zM2 0v2M4.500 0v2" /><path d="M7 5.500h9v4.500H7z" fill="#fff" /></svg>],
        [1673, <svg width="16" height="16" viewBox="0 0 16 16" fill="none" stroke="#fff" strokeWidth="1.300"><path d="M1 15Q1 3 15 1M5 15q0-8 10-9.500M9 15q0-4 6-5" /><circle cx="13.500" cy="14" r="1.500" fill="#fff" stroke="none" /></svg>],
        [1702, <svg width="20" height="16" viewBox="0 0 20 16" fill="none" stroke="#fff" strokeWidth="1.300"><path d="M1 5.500h3L8 2v12l-4-3.500H1zM11 5.500q2 2.500 0 5M13.500 3.500q3.500 4.500 0 9M16 1.500q5 6.500 0 13" /></svg>],
        [1740, <Fit w={28}>ENG</Fit>],
        [1808, <div className="flex flex-col items-center text-[14.500px] leading-[23px]"><Fit w={34}>10:48</Fit><Fit w={75}>24-06-2021</Fit></div>],
        [1879, <svg width="20" height="19" viewBox="0 0 20 19"><path d="M0 0h20v15H9l-4 4v-4H0z" fill="#fff" /><path d="M4 4h12M4 7.500h12M4 11h8" stroke="#1b2845" strokeWidth="1.300" /></svg>],
        [1889, <div className="pt-5"><Badge>1</Badge></div>],
        [1915, <div className="h-[50px] w-px bg-[#65707e]" />],
      ]} />
    </div>
  );
}

export default function App() {
  return (
    <div className="relative h-[1080px] w-[1920px] overflow-hidden bg-black">
      <div className='flex h-10 items-center bg-white px-[21px] pt-px font-["Open_Sans",sans-serif] text-[15px] text-[#999]'>
        <svg width="15" height="12" viewBox="0 0 15 12" stroke="#999"><path d="M0 .5h15M0 5.500h15M0 11.500h15" /></svg>
        <Fit w={139} className="ml-9">Adobe Reader Touch</Fit>
        <svg width="186" height="13" viewBox="0 0 186 13" fill="none" stroke="#999" className="ml-auto"><path d="m1 12.500 12-12M7 .5h6v6M1 6.500v6h6M59 6.500h12M115.500 3.500h9v9h-9zM118 3V.5h9v10h-2M172 .5l12 12M184 .5l-12 12" /></svg>
      </div>
      <div className="mx-[3px] h-[981px] bg-[#333]" />
      <div className="mx-[3px] flex h-[5px] bg-[#333]"><div className="ml-[287px] h-full w-[1341px] bg-[#d6d6d6]" /></div>
      <CalcWindow />
      <Taskbar />
      <div className='absolute top-[919px] left-[1554px] flex flex-col font-["Open_Sans",sans-serif] text-[#8f8f8f]/60'>
        <Fit w={196} className="text-[25px] leading-10">Activate Windows</Fit>
        <Fit w={284} className="text-[18px] leading-5">Go to Settings to activate Windows.</Fit>
      </div>
    </div>
  );
}
